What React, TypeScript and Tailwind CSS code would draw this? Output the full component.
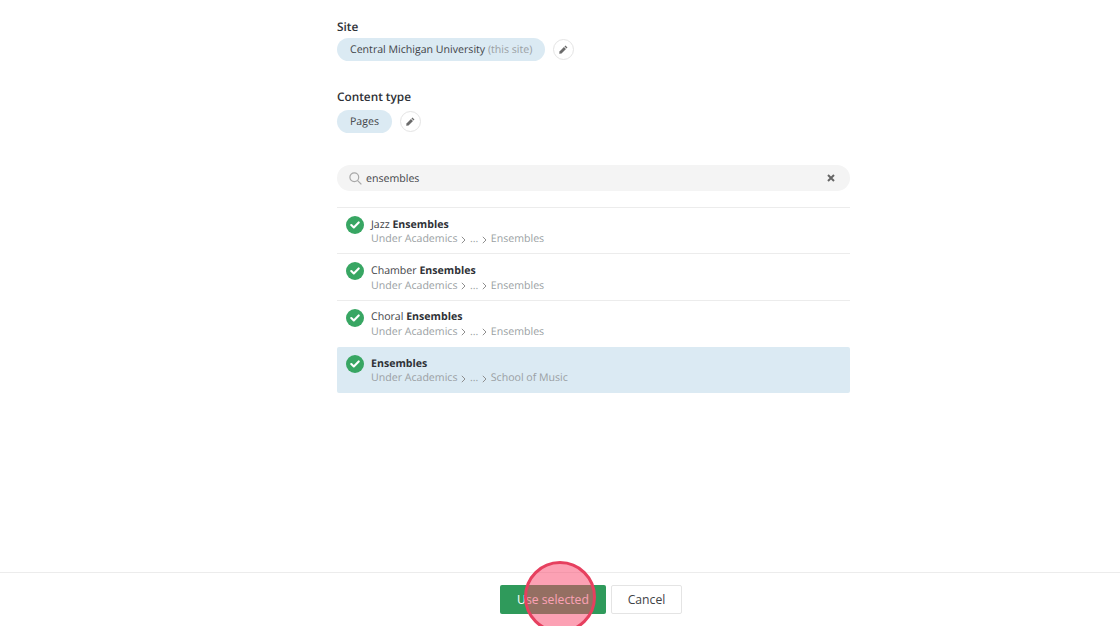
import React from 'react';

const results = [
  { plain: 'Jazz ', bold: 'Ensembles', path: 'Ensembles' },
  { plain: 'Chamber ', bold: 'Ensembles', path: 'Ensembles' },
  { plain: 'Choral ', bold: 'Ensembles', path: 'Ensembles' },
  { plain: '', bold: 'Ensembles', path: 'School of Music', selected: true },
];

const Pencil = () => (
  <svg width="9" height="9" viewBox="0 0 12 12" fill="#6b6b6b">
    <path d="M8.6 0.7 11.3 3.4 10 4.7 7.3 2Z" />
    <path d="M6.6 2.7 9.3 5.4 3.4 11.3 0.3 11.7 0.7 8.6Z" />
  </svg>
);

const EditButton = () => (
  <button className="w-[21px] h-[21px] rounded-full bg-white border border-[#e4e4e4] flex items-center justify-center">
    <Pencil />
  </button>
);

const Chevron = () => (
  <svg width="5" height="8" viewBox="0 0 5 8" fill="none" stroke="#8f8f8f" strokeWidth="1" className="ml-[4px] mr-[3.5px]">
    <path d="M0.8 0.8 4 4 0.8 7.2" />
  </svg>
);

const Check = () => (
  <div className="w-[18px] h-[18px] rounded-full bg-[#38a663] flex items-center justify-center shrink-0">
    <svg width="10" height="8" viewBox="0 0 10 8" fill="none" stroke="#fff" strokeWidth="2.1" strokeLinecap="round" strokeLinejoin="round">
      <path d="M1.3 4 3.8 6.4 8.7 1.4" />
    </svg>
  </div>
);

export default function App() {
  return (
    <div className="relative h-[626px] overflow-hidden bg-white flex flex-col font-['Open_Sans',sans-serif] [text-rendering:geometricPrecision] text-[10.6px] text-[#333]">
      <div className="flex-1 w-[513px] ml-[337px]">
        <div className="pt-[19px] h-[89px]">
          <div className="text-[11.8px] leading-[17px] font-semibold text-[#2f3237]">Site</div>
          <div className="mt-[2px] flex items-center gap-2">
            <div className="h-[23px] w-[208px] rounded-full bg-[#dbeaf3] pl-[13px] pt-[2px] flex items-center whitespace-nowrap text-[#3f4347]">
              Central Michigan University&nbsp;<span className="text-[#9a9fa3]">(this site)</span>
            </div>
            <EditButton />
          </div>
        </div>
        <div className="h-[76px]">
          <div className="text-[11.8px] leading-[17px] font-semibold text-[#2f3237]">Content type</div>
          <div className="mt-[4px] flex items-center gap-2">
            <div className="h-[23px] w-[55px] rounded-full bg-[#dbeaf3] pt-[2px] flex items-center justify-center text-[#3f4347]">
              Pages
            </div>
            <EditButton />
          </div>
        </div>
        <div className="h-[26px] rounded-full bg-[#f4f4f4] flex items-center pl-[12px] pr-[15px]">
          <svg width="13" height="13" viewBox="0 0 13 13" fill="none" stroke="#a8a8a8" strokeWidth="1.2">
            <circle cx="5.3" cy="5.3" r="4.4" />
            <path d="M8.6 8.6 12.4 12.4" />
          </svg>
          <span className="ml-[4px] flex-1 pt-[3px] text-[#3f4347]">ensembles</span>
          <svg width="8" height="8" viewBox="0 0 8 8" fill="none" stroke="#666" strokeWidth="2">
            <path d="M1 1 7 7M7 1 1 7" />
          </svg>
        </div>
        <div className="mt-[16px] border-t border-[#ececec]">
          {results.map((r, i) => (
            <div
              key={i}
              className={`h-[46.33px] flex items-start gap-[7.5px] pl-[8.5px] pt-[8px] ${
                r.selected ? 'bg-[#dbeaf3] rounded-[2px]' : i < 2 ? 'border-b border-[#ececec]' : ''
              }`}
            >
              <Check />
              <div className="leading-[14.5px] pt-[1.8px]">
                <div className="text-[#3f4347]">
                  {r.plain}
                  <span className="font-bold text-[#2f3237]">{r.bold}</span>
                </div>
                <div className="flex items-center text-[#9a9fa3]">
                  Under Academics
                  <Chevron />
                  ...
                  <Chevron />
                  {r.path}
                </div>
              </div>
            </div>
          ))}
        </div>
      </div>
      <div className="h-[54px] border-t border-[#ececec] flex justify-center gap-[5px] pt-[12px] pl-[62px]">
        <button className="h-[29px] w-[106px] rounded-[2px] bg-[#2f9a5b] pt-[1px] text-white text-[12.2px]">Use selected</button>
        <button className="h-[29px] w-[71px] rounded-[2px] bg-white border border-[#e4e4e4] pt-[1px] text-[#3f4347] text-[12.2px]">Cancel</button>
      </div>
      <div className="absolute left-[524px] top-[561px] w-[72px] h-[72px] rounded-full border-[3px] border-[#e6405f] bg-[#f9446a]/50" />
    </div>
  );
}
